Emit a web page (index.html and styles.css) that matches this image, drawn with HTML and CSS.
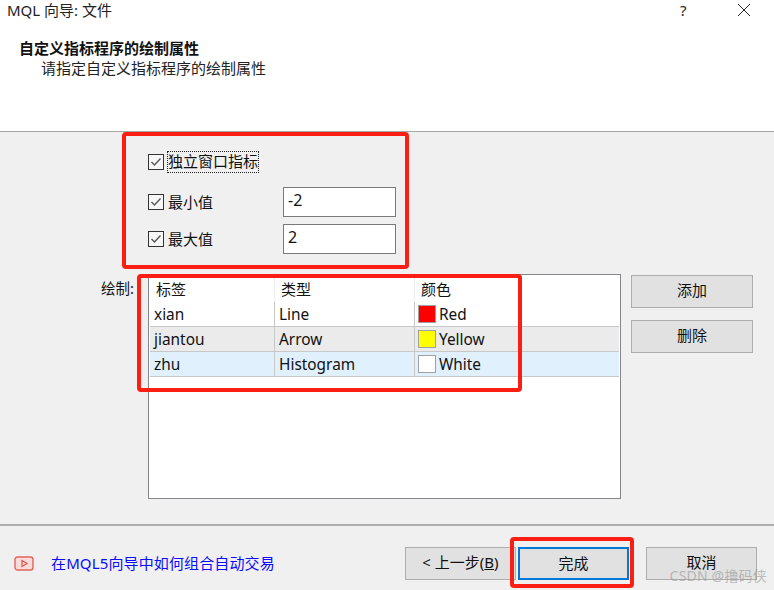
FILE: index.html
```html
<!DOCTYPE html>
<html lang="zh">
<head>
<meta charset="utf-8">
<title>MQL 向导: 文件</title>
<link rel="stylesheet" href="styles.css">
</head>
<body>
<div class="window">
  <header class="top">
    <div class="titlebar">
      <span class="title">MQL 向导: 文件</span>
      <span class="help">?</span>
      <svg class="close" width="14" height="14" viewBox="0 0 14 14"><path d="M1 1L13 13M13 1L1 13" stroke="#222" stroke-width="1" fill="none"/></svg>
    </div>
    <h1 class="heading">自定义指标程序的绘制属性</h1>
    <p class="sub">请指定自定义指标程序的绘制属性</p>
  </header>

  <main class="content">
    <div class="options">
      <div class="opt opt-first">
        <span class="check"><svg width="14" height="14" viewBox="0 0 14 14"><path d="M2.5 7L5.5 10L11.5 3.5" stroke="#555" stroke-width="1.4" fill="none"/></svg></span>
        <span class="focus">独立窗口指标</span>
      </div>
      <div class="opt opt-min">
        <span class="check"><svg width="14" height="14" viewBox="0 0 14 14"><path d="M2.5 7L5.5 10L11.5 3.5" stroke="#555" stroke-width="1.4" fill="none"/></svg></span>
        <span class="opt-label">最小值</span>
        <span class="field">-2</span>
      </div>
      <div class="opt opt-max">
        <span class="check"><svg width="14" height="14" viewBox="0 0 14 14"><path d="M2.5 7L5.5 10L11.5 3.5" stroke="#555" stroke-width="1.4" fill="none"/></svg></span>
        <span class="opt-label">最大值</span>
        <span class="field">2</span>
      </div>
    </div>

    <div class="plot">
      <span class="plot-label">绘制:</span>
      <div class="list">
        <div class="grid">
          <div class="row head"><span class="cell c1">标签</span><span class="cell c2">类型</span><span class="cell c3">颜色</span></div>
          <div class="row r1"><span class="cell c1">xian</span><span class="cell c2">Line</span><span class="cell c3"><i class="swatch red"></i>Red</span></div>
          <div class="row r2"><span class="cell c1">jiantou</span><span class="cell c2">Arrow</span><span class="cell c3"><i class="swatch yellow"></i>Yellow</span></div>
          <div class="row r3"><span class="cell c1">zhu</span><span class="cell c2">Histogram</span><span class="cell c3"><i class="swatch white"></i>White</span></div>
        </div>
      </div>
      <div class="side">
        <button class="btn side-btn"><span class="lift">添加</span></button>
        <button class="btn side-btn"><span class="lift">删除</span></button>
      </div>
    </div>
  </main>

  <footer class="bottom">
    <div class="link">
      <svg class="yt" width="20" height="15" viewBox="0 0 20 15"><rect x="1" y="1" width="18" height="13" rx="2.5" fill="#f7dcd9" stroke="#e4635c" stroke-width="1.4"/><path d="M8 4.6L13 7.5L8 10.4Z" fill="none" stroke="#e4524b" stroke-width="1.2"/></svg>
      <span class="link-text">在MQL5向导中如何组合自动交易</span>
    </div>
    <div class="actions">
      <button class="btn nav"><span class="lift">&lt; 上一步(<u>B</u>)</span></button>
      <button class="btn nav primary"><span class="nudge">完成</span></button>
      <button class="btn nav cancel"><span class="lift">取消</span></button>
    </div>
  </footer>

  <div class="mark m1"></div>
  <div class="mark m2"></div>
  <div class="mark m3"></div>
  <div class="watermark">CSDN @撸码侠</div>
</div>
</body>
</html>
```
FILE: styles.css
```css
* { box-sizing: border-box; }
html, body { margin: 0; padding: 0; }
body {
  font-family: "Noto Sans", "Noto Sans CJK SC", sans-serif;
  font-size: 15px;
  color: #111;
  background: #f0f0f0;
}
.window {
  position: relative;
  width: 774px;
  height: 590px;
  overflow: hidden;
  display: flex;
  flex-direction: column;
  background: #f0f0f0;
}
.top {
  height: 132px;
  background: #fff;
  border-bottom: 1px solid #a6a6a6;
  flex: none;
}
.titlebar {
  height: 40px;
  display: flex;
  align-items: flex-start;
  padding: 0 23px 0 7px;
  font-size: 15px;
  line-height: 21px;
  color: #222;
}
.title { flex: 1; }
.help { width: 14px; margin-right: 43px; font-size: 15px; }
.close { margin-top: 3px; }
.heading {
  margin: 0 0 0 19px;
  font-size: 15px;
  line-height: 16px;
  font-weight: 700;
  color: #111;
}
.sub {
  margin: 4px 0 0 41px;
  font-size: 15px;
  line-height: 16px;
  color: #222;
}
.content {
  flex: none;
  height: 394px;
  padding-top: 19px;
  border-bottom: 2px solid #aeaeae;
}
.options { padding-left: 148px; }
.opt { display: flex; align-items: center; }
.opt-first { height: 22px; }
.opt-min { margin-top: 14px; height: 30px; }
.opt-max { margin-top: 7px; height: 30px; }
.check {
  width: 16px;
  height: 16px;
  background: #f7f7f7;
  border: 1px solid #333;
  flex: none;
  display: flex;
}
.focus {
  margin-left: 3px;
  border: 1px dotted #222;
  line-height: 18px;
  height: 22px;
  font-size: 15px;
}
.opt-label { margin-left: 4px; width: 115px; font-size: 15px; line-height: 18px; }
.field {
  width: 113px;
  height: 30px;
  background: #fff;
  border: 1px solid #7a7a7a;
  padding-left: 4px;
  line-height: 25px;
  font-size: 16px;
}
.plot {
  display: flex;
  margin-top: 20px;
}
.plot-label {
  width: 148px;
  padding-left: 101px;
  line-height: 28px;
  font-size: 14.5px;
  flex: none;
}
.list {
  width: 473px;
  height: 225px;
  background: #fff;
  border: 1px solid #85858b;
  padding: 2px 0 0 1px;
  flex: none;
}
.grid { width: 469px; }
.row { display: flex; height: 25px; border-bottom: 1px solid #c8c8c8; font-size: 15.4px; line-height: 23px; }
.head { border-bottom: 0; font-size: 15px; line-height: 23px; }
.cell { display: flex; align-items: center; border-right: 1px solid #c8c8c8; padding-left: 4px; }
.head .cell { border-right-color: #ececec; padding-left: 6px; }
.c1 { width: 125px; }
.c2 { width: 140px; }
.c3 { flex: 1; border-right: 0; padding-left: 3px; }
.head .c3 { padding-left: 6px; }
.r2 { background: #ebebeb; }
.r3 { background: #e0f0fd; }
.swatch {
  width: 18px;
  height: 18px;
  margin-right: 3px;
  border: 1px solid #a0a0a0;
  display: block;
  flex: none;
}
.red { background: #f00; }
.yellow { background: #ff0; }
.white { background: #fff; }
.side {
  margin-left: 10px;
  margin-top: 1px;
  display: flex;
  flex-direction: column;
  gap: 12px;
}
.btn {
  font: inherit;
  font-size: 15px;
  color: #111;
  background: #e1e1e1;
  border: 1px solid #adadad;
  padding: 0;
}
.lift { position: relative; top: -2px; }
.nudge { position: relative; top: -1px; }
.side-btn { width: 122px; height: 33px; }
.bottom {
  flex: 1;
  display: flex;
  justify-content: space-between;
  padding: 21px 17px 0 14px;
}
.link { display: flex; align-items: center; height: 30px; }
.yt { flex: none; margin-top: 2px; }
.link-text { margin-left: 17px; color: #0a0aff; font-size: 15px; letter-spacing: 0.13px; }
.actions { display: flex; }
.nav { width: 111px; height: 33px; }
.primary { margin-left: 2px; border: 2px solid #0078d7; }
.cancel { margin-left: 17px; }
.mark {
  position: absolute;
  border: 4px solid #fb1f13;
  border-radius: 4px;
}
.m1 { left: 122px; top: 132px; width: 287px; height: 137px; }
.m2 { left: 137px; top: 274px; width: 385px; height: 118px; }
.m3 { left: 510px; top: 537px; width: 124px; height: 51px; }
.watermark {
  position: absolute;
  right: 7px;
  top: 567px;
  font-size: 14px;
  line-height: 18px;
  letter-spacing: 0.2px;
  color: rgba(150, 150, 150, 0.6);
}
```
